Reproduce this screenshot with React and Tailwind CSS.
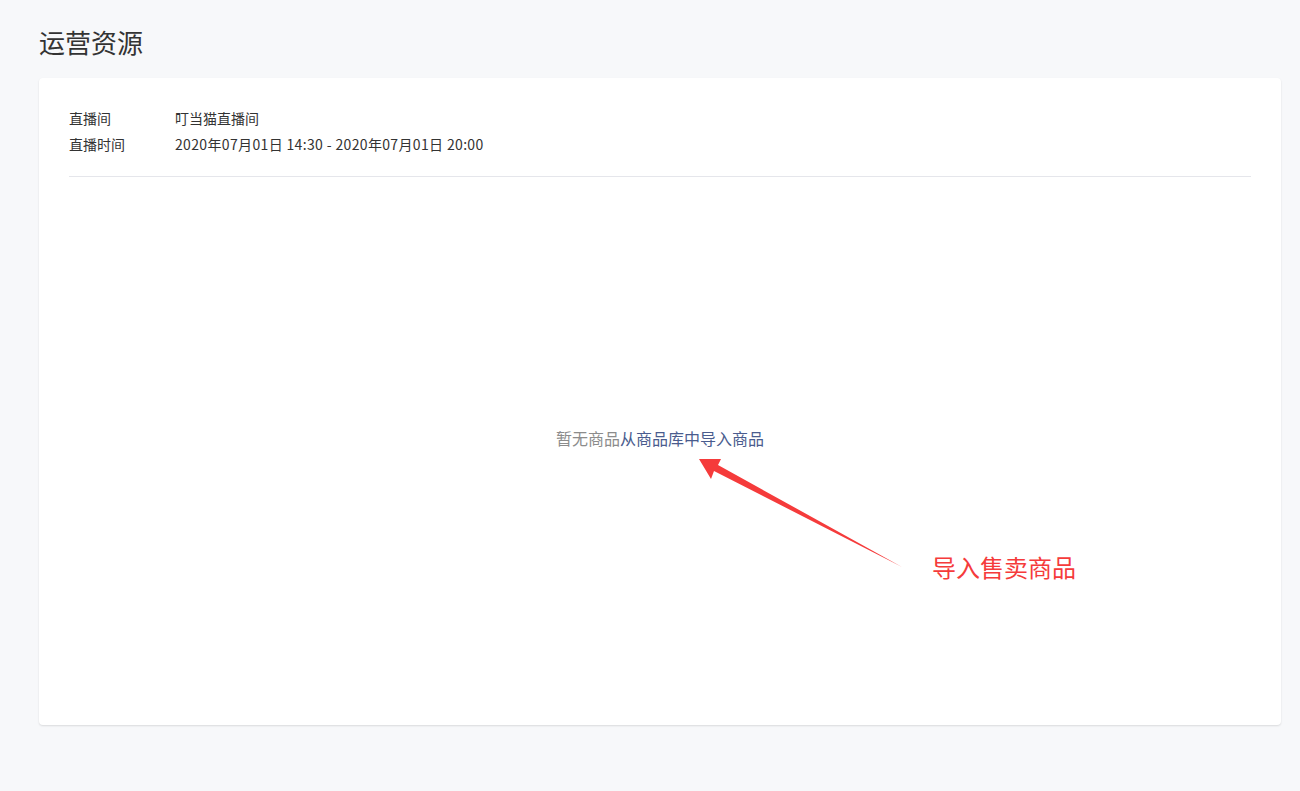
import React from 'react';

const font = { fontFamily: '"Noto Sans CJK SC", "Noto Sans", sans-serif' };

const InfoRow = ({ label, value, valueClass = '' }) => (
    <div className="flex items-center h-[26px] text-[14px] text-[#333]">
        <span className="w-[106px]">{label}</span>
        <span className={valueClass}>{value}</span>
    </div>
);

// red annotation arrow drawn over the page
const Arrow = () => (
    <svg className="absolute left-0 top-0 pointer-events-none" width="1300" height="791">
        <polygon
            points="699,459 721,459 718,465 902,567 714,471 711,479"
            fill="#f53b3b"
        />
    </svg>
);

export default function App() {
    return (
        <div className="relative min-h-[791px] w-full bg-[#f7f8fa] pl-[39px] pr-[19px] pt-[22px]" style={font}>
            <h1 className="text-[26px] leading-[40px] text-[#333] font-normal">运营资源</h1>

            <div className="mt-[16px] bg-white rounded-[4px] shadow-[0_1px_2px_rgba(0,0,0,0.12)] px-[30px]">
                <div className="pt-[27px] pb-[19px] border-b border-[#e5e6eb]">
                    <InfoRow label="直播间" value="叮当猫直播间" />
                    <InfoRow
                        label="直播时间"
                        value="2020年07月01日 14:30 - 2020年07月01日 20:00"
                        valueClass="tracking-[0.35px]"
                    />
                </div>
                <div className="h-[548px] flex justify-center pt-[249px]">
                    <p className="text-[16px] leading-[24px] text-[#8c8c8c]">
                        暂无商品<span className="text-[#4a5c8e] cursor-pointer">从商品库中导入商品</span>
                    </p>
                </div>
            </div>

            <Arrow />
            <div className="absolute left-[932px] top-[549px] text-[24px] leading-[36px] text-[#f53b3b]">
                导入售卖商品
            </div>
        </div>
    );
}
